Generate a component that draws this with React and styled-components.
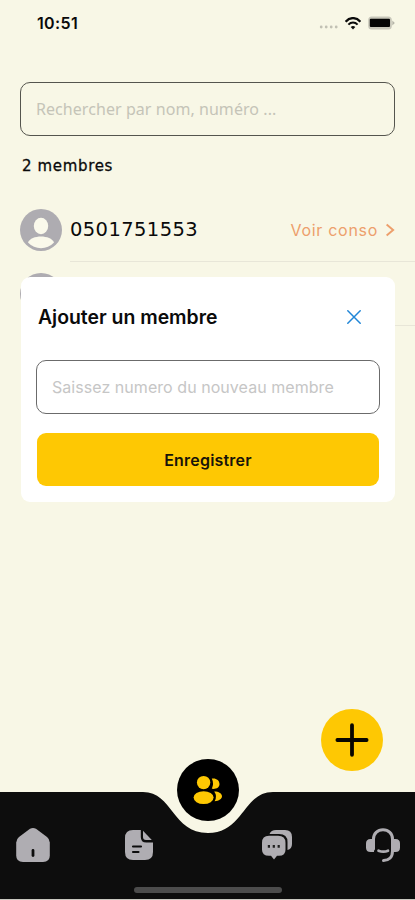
import React from "react";
import styled, { createGlobalStyle } from "styled-components";

const GlobalStyle = createGlobalStyle`
  * { box-sizing: border-box; }
  html, body { margin: 0; padding: 0; background: #f8f7e6; }
  button { border: 0; padding: 0; background: none; cursor: pointer; }
`;

const Screen = styled.div`
  position: relative;
  display: flex;
  flex-direction: column;
  width: 415px;
  height: 900px;
  overflow: hidden;
  background: #f8f7e6;
  color: #0a0a0a;
  font-family: Inter, sans-serif;
`;

const StatusBar = styled.header`
  display: flex;
  align-items: center;
  justify-content: space-between;
  height: 46px;
  padding: 0 20px 0 37px;
`;

const Clock = styled.span`
  font-size: 16px;
  font-weight: 600;
  letter-spacing: 0.35px;
`;

const StatusIcons = styled.div`
  display: flex;
  align-items: center;
  gap: 7px;
`;

const Content = styled.main`
  flex: 1;
  padding-top: 36px;
`;

const TextField = styled.input`
  display: block;
  width: ${(p) => p.$width}px;
  height: 54px;
  margin: ${(p) => p.$margin};
  padding: 0 15px;
  border: 1px solid ${(p) => p.$border};
  border-radius: 10px;
  outline: 0;
  background: transparent;
  font-family: ${(p) => p.$font};
  font-size: ${(p) => p.$size}px;
  letter-spacing: ${(p) => p.$spacing}px;
  &::placeholder { color: ${(p) => p.$hint}; opacity: 1; }
`;

const Count = styled.h2`
  margin: 18px 0 0 22px;
  font-family: "DejaVu Sans", sans-serif;
  font-size: 15px;
  line-height: 24px;
  letter-spacing: 0.65px;
  font-weight: 500;
  -webkit-text-stroke: 0.3px #0a0a0a;
`;

const MemberList = styled.ul`
  margin: 20px 0 0;
  padding: 0;
  list-style: none;
`;

const Member = styled.li`
  display: flex;
  align-items: center;
  gap: 8px;
  height: 64px;
  padding-left: 20px;
`;

const MemberBody = styled.div`
  display: flex;
  align-items: center;
  justify-content: space-between;
  flex: 1;
  height: 64px;
  padding-right: 20px;
  border-bottom: 1px solid #e8e6d8;
`;

const Phone = styled.span`
  font-family: "DejaVu Sans", sans-serif;
  font-size: 19.5px;
  letter-spacing: 0.4px;
`;

const Details = styled.button`
  display: flex;
  align-items: center;
  gap: 8px;
  color: #ed9f6c;
  font-family: Inter, sans-serif;
  font-size: 16px;
  letter-spacing: 0.7px;
`;

const Modal = styled.section`
  position: absolute;
  top: 277px;
  left: 21px;
  width: 374px;
  height: 225px;
  padding: 0 16px;
  border-radius: 9px;
  background: #fff;
`;

const ModalHeader = styled.div`
  display: flex;
  align-items: center;
  justify-content: space-between;
  height: 83px;
  padding: 0 18px 3px 1px;
`;

const ModalTitle = styled.h1`
  margin: 0;
  font-size: 19.4px;
  font-weight: 600;
`;

const CloseButton = styled.button`
  display: flex;
`;

const SaveButton = styled.button`
  display: block;
  width: 342px;
  height: 53px;
  margin-top: 19px;
  border-radius: 9px;
  background: #fec803;
  color: #17130a;
  font: 600 16px Inter, sans-serif;
  letter-spacing: 0.2px;
`;

const AddButton = styled.button`
  position: absolute;
  top: 709px;
  left: 321px;
  display: grid;
  place-items: center;
  width: 62px;
  height: 62px;
  border-radius: 50%;
  background: #fec803;
`;

const BottomNav = styled.nav`
  position: relative;
  height: 108px;
  border-bottom: 1px solid #c9c8c0;
`;

const NavShape = styled.svg`
  position: absolute;
  inset: 0;
`;

const NavItems = styled.div`
  position: relative;
  display: flex;
  align-items: center;
  justify-content: space-between;
  height: 106px;
  padding: 0 14px 0 14px;
`;

const NavGroup = styled.div`
  display: flex;
  align-items: center;
  gap: ${(p) => p.$gap}px;
`;

const NavButton = styled.button`
  display: flex;
`;

const ActiveTab = styled.button`
  display: grid;
  place-items: center;
  width: 62px;
  height: 62px;
  margin: -110px 0 0 1px;
  border-radius: 50%;
  background: #000;
`;

const HomeIndicator = styled.div`
  position: absolute;
  bottom: 6px;
  left: 134px;
  width: 148px;
  height: 6px;
  border-radius: 3px;
  background: #4c4c4c;
`;

const SignalIcon = () => (
  <svg width="19" height="14" viewBox="0 0 19 14" fill="#c2c1b4">
    <circle cx="2.2" cy="11" r="1.4" /><circle cx="7.2" cy="11" r="1.4" />
    <circle cx="12.2" cy="11" r="1.4" /><circle cx="17.2" cy="11" r="1.4" />
  </svg>
);

const WifiIcon = () => (
  <svg width="16" height="13" viewBox="0 0 16 13" fill="none" stroke="#0b0b0b">
    <path d="M.6 4.7C4.8-.1 11.2-.1 15.4 4.7" strokeWidth="2.3" />
    <path d="M3.4 7.6C6.1 4.7 9.9 4.7 12.6 7.6" strokeWidth="2" />
    <path d="M8 12.5 5.7 9.9Q8 8 10.3 9.9Z" fill="#0b0b0b" stroke="none" />
  </svg>
);

const BatteryIcon = () => (
  <svg width="27" height="14" viewBox="0 0 27 14">
    <rect x=".2" y=".6" width="23.6" height="12.8" rx="3.5" fill="#c8c7ba" />
    <rect x="1.8" y="2.7" width="20.2" height="8.4" rx="1" fill="#050505" />
    <path d="M24.3 4.5 26.8 7l-2.5 2.5Z" fill="#b5b4a8" />
  </svg>
);

const Avatar = () => (
  <svg width="42" height="42" viewBox="0 0 42 42">
    <circle cx="21" cy="21" r="21" fill="#aeacb1" />
    <ellipse cx="21" cy="17" rx="7.2" ry="8.2" fill="#faf9eb" />
    <path d="M8 33.5C11 25.5 31 25.5 34 33.5 27 41 15 41 8 33.5Z" fill="#faf9eb" />
  </svg>
);

const Chevron = () => (
  <svg width="9" height="14" viewBox="0 0 9 14" fill="none" stroke="#ed9f6c" strokeWidth="2">
    <path d="m.6 1.5 6.5 5.5L.6 12.5" />
  </svg>
);

const CloseIcon = () => (
  <svg width="14" height="14" viewBox="0 0 14 14" stroke="#2086d7" strokeWidth="1.5" strokeLinecap="round">
    <path d="m.8.8 12.4 12.4M13.2.8.8 13.2" />
  </svg>
);

const PlusIcon = () => (
  <svg width="34" height="34" viewBox="0 0 34 34" stroke="#080600" strokeWidth="3.8" strokeLinecap="round">
    <path d="M17 2.2v29.6M2.4 17h29.2" />
  </svg>
);

const HomeIcon = () => (
  <svg width="36" height="36" viewBox="0 0 36 36">
    <path d="M16 1.8Q19 0 22 1.8L33 10Q35.8 12.2 35.8 15.5V28.5Q35.8 35 29 35H9Q2.2 35 2.2 28.5V15.5Q2.2 12.2 5 10Z" fill="#afadb2" />
    <path d="M19 23.5v5" stroke="#0d0d0d" strokeWidth="2.8" strokeLinecap="round" />
  </svg>
);

const DocumentIcon = () => (
  <svg width="28" height="30" viewBox="0 0 28 30">
    <path d="M8 0h7.8v7q0 5.5 5.5 5.5H28V22q0 8-8 8H8q-8 0-8-8V8Q0 0 8 0Z" fill="#afadb2" />
    <path d="m18 .8 8.8 9.2H21q-3 0-3-3Z" fill="#afadb2" />
    <path d="M8 16.5h8M8 22h5.5" stroke="#0d0d0d" strokeWidth="2.1" strokeLinecap="round" />
  </svg>
);

const PeopleIcon = () => (
  <svg width="30" height="30" viewBox="0 0 30 30" fill="#fec803">
    <path d="M18.8 3.6C23 2.8 26.5 5.3 26.5 9S23 14.4 18.8 13.8Q21.2 8.5 18.8 3.6Z" />
    <path d="M21.2 16.4C26 16.4 29 18.5 29 21.2S26 25.8 21.6 26.2Q24.6 21 21.2 16.4Z" />
    <circle cx="10.6" cy="7.6" r="6.7" />
    <ellipse cx="10.6" cy="22.6" rx="10" ry="6.4" />
  </svg>
);

const ChatIcon = () => (
  <svg width="30" height="30" viewBox="0 0 30 30">
    <path d="M7.5 4Q9 0 14 0h9q7 0 7 7v7q0 5-4.5 6v-8q0-8-8.5-8Z" fill="#afadb2" />
    <path d="M7 5.8h9q7.5 0 7.5 7v7q0 6-6.5 6h-2L12 29.5l-3-3.7H7q-7 0-7-6v-7q0-7 7-7Z" fill="#afadb2" />
    <path d="M5.8 15h2.2v2.8H5.800zm4.900 0h2.200v2.800h-2.200zm4.900 0h2.200v2.800h-2.200z" fill="#202020" />
  </svg>
);

const HeadsetIcon = () => (
  <svg width="36" height="36" viewBox="0 0 36 36" fill="none">
    <path d="M8.500 22V12C8.500 6.500 12.500 2.800 18 2.800s9.500 3.700 9.500 9.200v12c0 6.500-4 9.500-9 9.500" stroke="#afadb2" strokeWidth="3" strokeLinecap="round" />
    <path d="M9 12H5.500C2.500 12 1 13.500 1 16.500v4C1 23.500 2.500 25 5.500 25H9Z" fill="#afadb2" />
    <path d="M27.500 12h3c3 0 4.500 1.500 4.500 4.500v4c0 3-1.500 4.500-4.500 4.500h-3Z" fill="#afadb2" />
    <path d="M13.500 23.700q5 2 9.500 0" stroke="#afadb2" strokeWidth="2.700" strokeLinecap="round" />
  </svg>
);

export default function App() {
  return (
    <>
      <GlobalStyle />
      <Screen>
        <StatusBar>
          <Clock>10:51</Clock>
          <StatusIcons><SignalIcon /><WifiIcon /><BatteryIcon /></StatusIcons>
        </StatusBar>
        <Content>
          <TextField $width={375} $margin="0 0 0 20px" $border="#55554e" $hint="#c5c4b8"
            $font={'"Noto Sans", sans-serif'} $size={16} $spacing={0.06}
            placeholder="Rechercher par nom, numéro ..." />
          <Count>2 membres</Count>
          <MemberList>
            <Member>
              <Avatar />
              <MemberBody>
                <Phone>0501751553</Phone>
                <Details>Voir conso <Chevron /></Details>
              </MemberBody>
            </Member>
            <Member>
              <Avatar />
              <MemberBody />
            </Member>
          </MemberList>
        </Content>
        <BottomNav>
          <NavShape width="415" height="107" viewBox="0 0 415 107">
            <path d="M0 0H143C173 0 172 41 208 41S243 0 273 0H415V107H0Z" fill="#0d0d0d" />
          </NavShape>
          <NavItems>
            <NavGroup $gap={75}>
              <NavButton aria-label="Accueil"><HomeIcon /></NavButton>
              <NavButton aria-label="Documents"><DocumentIcon /></NavButton>
            </NavGroup>
            <ActiveTab aria-label="Membres"><PeopleIcon /></ActiveTab>
            <NavGroup $gap={73}>
              <NavButton aria-label="Messages"><ChatIcon /></NavButton>
              <NavButton aria-label="Assistance"><HeadsetIcon /></NavButton>
            </NavGroup>
          </NavItems>
          <HomeIndicator />
        </BottomNav>
        <AddButton aria-label="Ajouter"><PlusIcon /></AddButton>
        <Modal>
          <ModalHeader>
            <ModalTitle>Ajouter un membre</ModalTitle>
            <CloseButton aria-label="Fermer"><CloseIcon /></CloseButton>
          </ModalHeader>
          <TextField $width={344} $margin="0 0 0 -1px" $border="#6b6b6b" $hint="#c6c6c6"
            $font="Inter, sans-serif" $size={16} $spacing={0.05}
            placeholder="Saissez numero du nouveau membre" />
          <SaveButton>Enregistrer</SaveButton>
        </Modal>
      </Screen>
    </>
  );
}
